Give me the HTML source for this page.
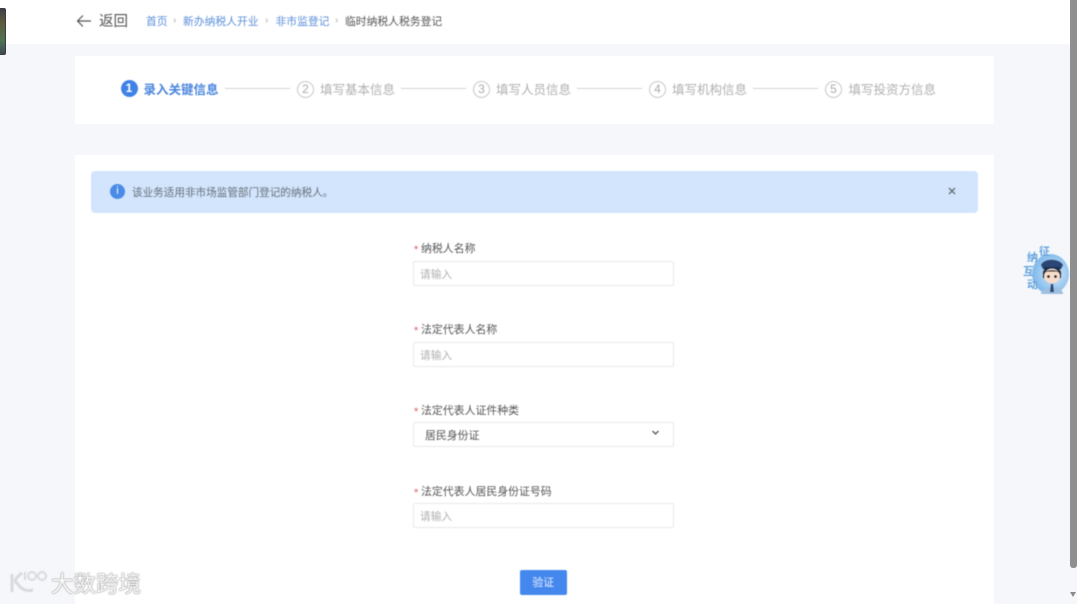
<!DOCTYPE html>
<html lang="zh-CN">
<head>
<meta charset="utf-8">
<style>
html,body{margin:0;padding:0}
body{width:1080px;height:604px;position:relative;overflow:hidden;background:#f5f7fa;font-family:"Liberation Sans","Noto Sans CJK SC",sans-serif;color:#555}
.a{position:absolute;white-space:nowrap}
.blur{filter:blur(.5px)}
.top{left:0;top:0;width:1080px;height:44px;background:#fff}
.card{background:#fff}
.bc{font-size:10.8px;line-height:16px;top:14px;color:#5b8fd9}
.sep{font-size:10px;line-height:16px;top:13px;color:#aaa}
.step{font-size:12.5px;line-height:18px;top:81px;color:#b0b0b0}
.num{top:80.500px;width:15px;height:15px;border:1px solid #c8c8c8;border-radius:50%;font-size:12px;line-height:15px;text-align:center;color:#aaa}
.line{top:88px;height:1px;background:#d4d4d4}
.label{font-size:10.9px;line-height:16px;color:#555;left:421px}
.star{font-size:10.9px;line-height:16px;color:#e0585b;left:414px}
.input{left:413px;width:259px;height:23px;border:1px solid #e6e8ec;border-radius:2px;background:#fff}
.ph{left:420px;font-size:10.7px;line-height:16px;color:#b0b0b0}
.wz{font-size:11px;line-height:12px;font-weight:bold;color:#5c9fdc;text-shadow:0 0 1px #fff}
</style>
</head>
<body>
<div class="a top"></div>
<div class="a card" style="left:75px;top:56px;width:919px;height:68px"></div>
<div class="a card" style="left:75px;top:155px;width:919px;height:449px"></div>

<!-- left tab -->
<div class="a" style="left:-3px;top:8px;width:9px;height:47px;background:linear-gradient(180deg,#3d4147 0,#5e5c3c 30%,#4f7353 70%,#3f4a55 100%);border-radius:2px;border:1px solid #3a3d42;box-sizing:border-box"></div>

<div class="blur">
<!-- header -->
<svg class="a" style="left:76px;top:13px" width="16" height="16" viewBox="0 0 16 16" fill="none" stroke="#555" stroke-width="1.2"><path d="M1.500 8H15M7 2.500L1.500 8L7 13.500"/></svg>
<div class="a" style="left:99px;top:12px;font-size:14.5px;line-height:20px;color:#555">返回</div>
<div class="a bc" style="left:146px">首页</div>
<div class="a sep" style="left:173px">›</div>
<div class="a bc" style="left:183px">新办纳税人开业</div>
<div class="a sep" style="left:265px">›</div>
<div class="a bc" style="left:275.500px">非市监登记</div>
<div class="a sep" style="left:335px">›</div>
<div class="a bc" style="left:345px;color:#555">临时纳税人税务登记</div>

<!-- steps -->
<div class="a" style="left:120.500px;top:80px;width:17px;height:17px;border-radius:50%;background:#3f82e6;color:#fff;font-size:12px;font-weight:bold;line-height:17px;text-align:center">1</div>
<div class="a step" style="left:143.500px;color:#4a86dc;font-weight:bold">录入关键信息</div>
<div class="a line" style="left:225px;width:65px"></div>
<div class="a num" style="left:297px">2</div>
<div class="a step" style="left:320px">填写基本信息</div>
<div class="a line" style="left:401px;width:65px"></div>
<div class="a num" style="left:473px">3</div>
<div class="a step" style="left:496px">填写人员信息</div>
<div class="a line" style="left:577px;width:65px"></div>
<div class="a num" style="left:649px">4</div>
<div class="a step" style="left:672px">填写机构信息</div>
<div class="a line" style="left:753px;width:65px"></div>
<div class="a num" style="left:825px">5</div>
<div class="a step" style="left:848.500px">填写投资方信息</div>

<!-- alert -->
<div class="a" style="left:91px;top:171px;width:887px;height:42px;background:#d2e5fc;border-radius:4px"></div>
<div class="a" style="left:110px;top:184px;width:15px;height:15px;border-radius:50%;background:#4a8be8;color:#fff;font-size:11px;line-height:15px;text-align:center">i</div>
<div class="a" style="left:132px;top:185px;font-size:10.6px;line-height:16px;color:#666f7a">该业务适用非市场监管部门登记的纳税人。</div>
<svg class="a" style="left:947px;top:186px" width="10" height="10" viewBox="0 0 10 10" stroke="#666f7a" stroke-width="1.300"><path d="M2 2L8 8M8 2L2 8"/></svg>

<!-- form -->
<div class="a star" style="top:242px">*</div>
<div class="a label" style="top:241px">纳税人名称</div>
<div class="a input" style="top:261px"></div>
<div class="a ph" style="top:267px">请输入</div>

<div class="a star" style="top:323px">*</div>
<div class="a label" style="top:322px">法定代表人名称</div>
<div class="a input" style="top:342px"></div>
<div class="a ph" style="top:348px">请输入</div>

<div class="a star" style="top:404px">*</div>
<div class="a label" style="top:403px">法定代表人证件种类</div>
<div class="a input" style="top:422px"></div>
<div class="a" style="left:425px;top:428px;font-size:10.9px;line-height:16px;color:#555">居民身份证</div>
<svg class="a" style="left:650px;top:428px" width="11" height="10" viewBox="0 0 11 10" fill="none" stroke="#555" stroke-width="1.300"><path d="M2.500 3L5.500 6L8.500 3"/></svg>

<div class="a star" style="top:485px">*</div>
<div class="a label" style="top:484px">法定代表人居民身份证号码</div>
<div class="a input" style="top:503px"></div>
<div class="a ph" style="top:509px">请输入</div>

<div class="a" style="left:520px;top:570px;width:46.500px;height:25px;border-radius:2px;background:#4488ee;color:#e8f0fc;font-size:10.9px;line-height:26px;text-align:center">验证</div>

<!-- floating widget -->
<div class="a" style="left:1032px;top:254px;width:37px;height:40px;border-radius:50%;background:radial-gradient(circle at 60% 50%,#d6eafa,#6fb0e8 85%)"></div>
<svg class="a" style="left:1037px;top:256px" width="30" height="38" viewBox="0 0 30 38">
<path d="M4 9C7 2 22 2 26 9L24 13H6Z" fill="#2a4674"/>
<rect x="7" y="11" width="16" height="3" fill="#1c2f50"/>
<path d="M6 16C6 12 24 12 24 16L24 22H6Z" fill="#26262e"/>
<ellipse cx="15" cy="20" rx="8" ry="7.500" fill="#f7dccb"/>
<path d="M7 17C8 13.500 22 13.500 23 17L20 15.500H10Z" fill="#26262e"/>
<circle cx="11.500" cy="20.500" r="1.300" fill="#222"/><circle cx="18.500" cy="20.500" r="1.300" fill="#222"/>
<path d="M4 38C4 29 26 29 26 38Z" fill="#9dbfe0"/>
<path d="M14 28H16L16.800 36H13.200Z" fill="#2a4674"/>
</svg>
<div class="a wz" style="left:1039px;top:246px">征</div>
<div class="a wz" style="left:1027px;top:252px">纳</div>
<div class="a wz" style="left:1023px;top:266px">互</div>
<div class="a wz" style="left:1027px;top:279px">动</div>

<!-- watermark -->
<svg class="a" style="left:9px;top:568px" width="42" height="28" viewBox="0 0 42 28" fill="none" stroke="#d8dade" stroke-width="3"><path d="M3 6V24M13 5C6 10 5 14 8 15C11 20 16 24 24 22"/><circle cx="23" cy="8" r="4" stroke-width="2"/><circle cx="33" cy="8" r="4" stroke-width="2"/><path d="M16 4V12" stroke-width="2"/></svg>
<div class="a" style="left:51px;top:572px;font-size:22.500px;line-height:26px;color:#fff;text-shadow:0 0 1px #777,0 0 1px #777,0 0 1px #777">大数跨境</div>
</div>

<!-- scrollbar -->
<div class="a" style="left:1077px;top:0;width:3px;height:604px;background:#fff"></div>
<div class="a" style="left:1070px;top:0;width:7px;height:568px;background:#8f8f8f;border-radius:0 0 3px 3px"></div>
<div class="a" style="left:1070px;top:592px;width:0;height:0;border-left:3.500px solid transparent;border-right:3.500px solid transparent;border-top:5px solid #8a8a8a"></div>
</body>
</html>
